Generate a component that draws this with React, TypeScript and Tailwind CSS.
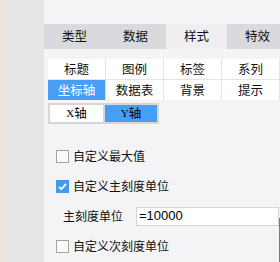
import React from "react";

const cjk = { fontFamily: '"Noto Sans CJK SC", "Noto Sans", sans-serif' };

function Check({ checked }: { checked?: boolean }) {
  if (checked) {
    return (
      <div className="w-[13px] h-[13px] bg-[#3d9cf0] flex items-center justify-center shrink-0">
        <svg width="11" height="11" viewBox="0 0 11 11">
          <path d="M2 5.8 L4.4 8.2 L9 2.8" fill="none" stroke="#fff" strokeWidth="1.8" />
        </svg>
      </div>
    );
  }
  return <div className="w-[13px] h-[13px] border-[1.5px] border-[#a3a3a3] bg-[#fafafa] shrink-0" />;
}

export default function App() {
  const tabs = ["类型", "数据", "样式", "特效"];
  const sub = ["标题", "图例", "标签", "系列", "坐标轴", "数据表", "背景", "提示"];
  return (
    <div className="w-[280px] h-[262px] flex overflow-hidden text-[12px] text-[#111]" style={cjk}>
      <div className="w-[44px] h-full bg-[#e6e6e6] shrink-0 flex">
        <div className="w-[2px] h-full bg-[#ebe6e2]" />
        <div className="w-px h-full bg-[#f1e4d6]" />
      </div>
      <div className="relative flex-1 h-full bg-[#f4f4f6] flex flex-col pt-[24px] overflow-hidden">
        <div className="flex h-[25px]">
          {tabs.map((t, i) => (
            <div
              key={t}
              className={
                "w-[61px] shrink-0 flex items-center justify-center text-[12.5px] " +
                (i === 2 ? "bg-[#efeff1]" : "bg-[#d9dadd]")
              }
            >
              {t}
            </div>
          ))}
        </div>
        <div className="mt-[10px] ml-[4px] grid grid-cols-[57px_57px_57px_57px] grid-rows-[20px_20px] gap-px bg-[#e4e4e6] w-[232px]">
          {sub.map((s, i) => (
            <div
              key={s}
              className={
                "flex items-center justify-center text-[12.5px] " +
                (i === 4 ? "bg-[#469ff5] text-white" : "bg-white")
              }
            >
              {s}
            </div>
          ))}
        </div>
        <div className="mt-[3px] ml-[4px] flex h-[21px]">
          <div className="w-[57px] border-2 border-[#d6d6d8] bg-white text-black flex items-center justify-center text-[12.5px]">
            <span className="text-[11px]" style={{ fontFamily: '"Liberation Serif", serif' }}>X</span>轴
          </div>
          <div className="w-[54px] border-2 border-l-0 border-[#d6d6d8] bg-[#469ff5] text-black flex items-center justify-center text-[12.5px]">
            <span className="text-[11px]" style={{ fontFamily: '"Liberation Serif", serif' }}>Y</span>轴
          </div>
        </div>
        <div className="mt-[17px] h-[30px] pl-[12px] flex items-center gap-[4px] text-[12px]">
          <Check />
          <span>自定义最大值</span>
        </div>
        <div className="h-[30px] pl-[12px] flex items-center gap-[4px] text-[12px]">
          <Check checked />
          <span>自定义主刻度单位</span>
        </div>
        <div className="h-[30px] pl-[19px] flex items-center text-[12px]">
          <span className="w-[73px] shrink-0">主刻度单位</span>
          <div
            className="w-[143px] h-[19px] shrink-0 bg-white border border-[#d4d4d6] pl-[2px] flex items-center text-[13px] text-black"
            style={{ fontFamily: '"Liberation Sans", Arial, sans-serif' }}
          >
            =10000
          </div>
        </div>
        <div className="h-[30px] pl-[12px] flex items-center gap-[4px] text-[12px]">
          <Check />
          <span>自定义次刻度单位</span>
        </div>
        <div className="absolute right-0 top-[218px] w-px h-[44px] bg-[#7a7a7a]" />
      </div>
    </div>
  );
}
